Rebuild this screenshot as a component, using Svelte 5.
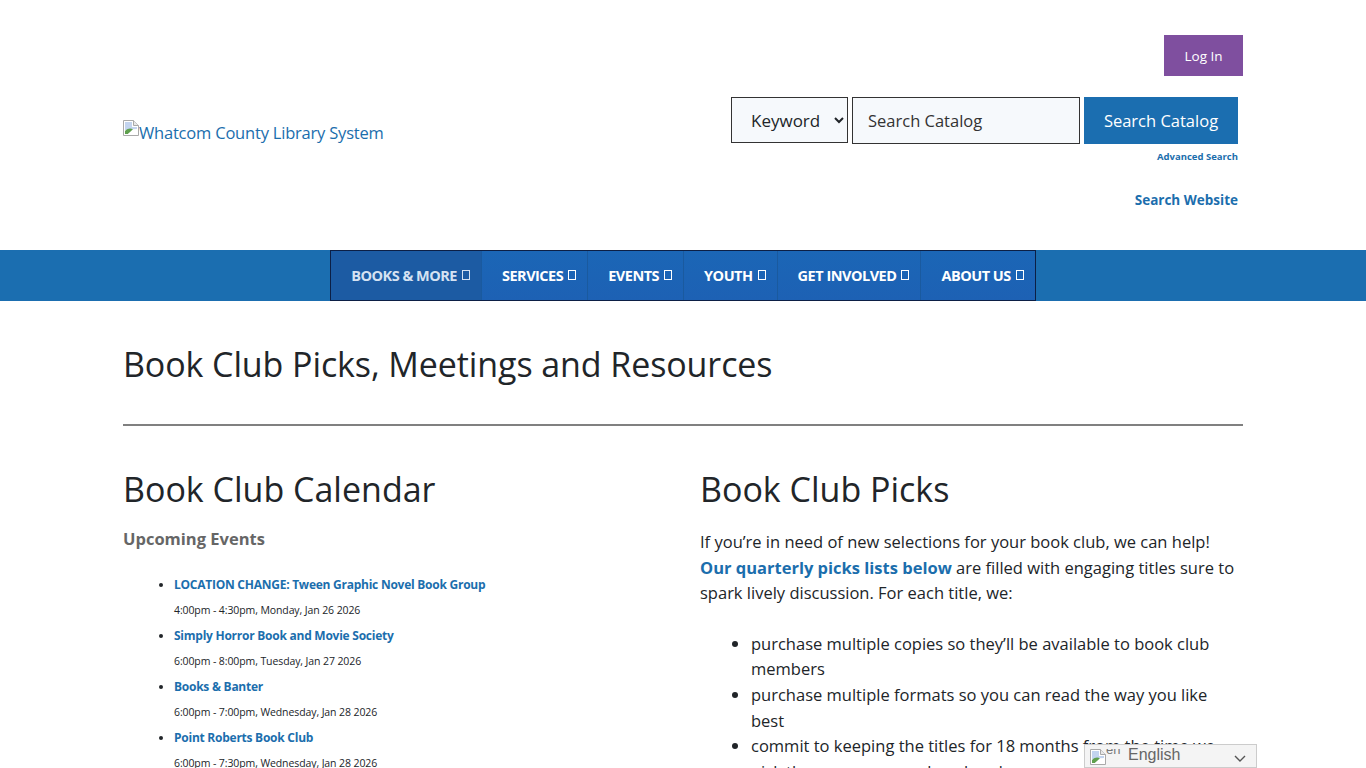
<script lang="ts">
    const navItems = [
        { label: "BOOKS & MORE", active: true },
        { label: "SERVICES" },
        { label: "EVENTS" },
        { label: "YOUTH" },
        { label: "GET INVOLVED" },
        { label: "ABOUT US" }
    ];

    const events = [
        { title: "LOCATION CHANGE: Tween Graphic Novel Book Group", time: "4:00pm - 4:30pm, Monday, Jan 26 2026" },
        { title: "Simply Horror Book and Movie Society", time: "6:00pm - 8:00pm, Tuesday, Jan 27 2026" },
        { title: "Books & Banter", time: "6:00pm - 7:00pm, Wednesday, Jan 28 2026" },
        { title: "Point Roberts Book Club", time: "6:00pm - 7:30pm, Wednesday, Jan 28 2026" }
    ];
</script>

{#snippet brokenImage()}
    <svg class="broken" width="16" height="16" viewBox="0 0 16 16" aria-hidden="true">
        <path d="M0.5 0.5H10.5L15.5 5.5V15.5H0.5Z" fill="#fff" stroke="#a9a9a9" />
        <path d="M10.5 0.5V5.5H15.5" fill="#e8e8e8" stroke="#a9a9a9" />
        <path d="M2 2H9V7H14V9L2 10Z" fill="#c3d4ef" />
        <path d="M2 14V11C5 8 8 8 10 9.5L5 14Z" fill="#5fa04e" />
        <path d="M5 14L10 9.5L14 10.5L9 14Z" fill="#fff" />
    </svg>
{/snippet}

<div class="page">
    <header class="site-header">
        <a class="logo" href="#home">{@render brokenImage()}Whatcom County Library System</a>

        <div class="header-right">
            <button class="login">Log In</button>

            <form class="search-row">
                <select class="search-type">
                    <option>Keyword</option>
                </select>
                <input class="search-input" type="text" placeholder="Search Catalog" />
                <button class="search-btn" type="button">Search Catalog</button>
            </form>
            <a class="advanced" href="#advanced">Advanced Search</a>
            <a class="website" href="#website">Search Website</a>
        </div>
    </header>

    <nav class="main-nav">
        <ul>
            {#each navItems as item}
                <li class:active={item.active}>
                    <a href="#nav">{item.label} <span class="tofu"></span></a>
                </li>
            {/each}
        </ul>
    </nav>

    <main class="content">
        <h1>Book Club Picks, Meetings and Resources</h1>
        <hr />

        <div class="columns">
            <section>
                <h2>Book Club Calendar</h2>
                <h3>Upcoming Events</h3>
                <ul class="events">
                    {#each events as ev}
                        <li>
                            <a href="#event">{ev.title}</a>
                            <p>{ev.time}</p>
                        </li>
                    {/each}
                </ul>
            </section>

            <section>
                <h2>Book Club Picks</h2>
                <p class="intro">
                    If you’re in need of new selections for your book club, we can help!
                    <a href="#picks">Our quarterly picks lists below</a> are filled with engaging titles sure to spark lively discussion. For each title, we:
                </p>
                <ul class="promises">
                    <li>purchase multiple copies so they’ll be available to book club members</li>
                    <li>purchase multiple formats so you can read the way you like best</li>
                    <li>commit to keeping the titles for 18 months from the time we pick them so you can plan ahead</li>
                </ul>
            </section>
        </div>
    </main>

    <div class="translate">
        <div class="flag">
            {@render brokenImage()}<span>en</span>
        </div>
        <span class="lang">English</span>
        <svg class="chev" width="12" height="7" viewBox="0 0 12 7" aria-hidden="true">
            <path d="M1 1L6 6L11 1" fill="none" stroke="#555" stroke-width="1.4" />
        </svg>
    </div>
</div>

<style>
    :global(body) {
        margin: 0;
        background: #fff;
    }

    .page {
        height: 768px;
        overflow: hidden;
        font-family: "Open Sans", "Noto Sans", sans-serif;
        color: #212529;
        position: relative;
    }

    a {
        color: #1b6ead;
        text-decoration: none;
    }

    .site-header {
        width: 1120px;
        height: 250px;
        margin: 0 auto;
        display: flex;
        justify-content: space-between;
        box-sizing: border-box;
        padding-top: 35px;
    }

    .logo {
        margin-top: 85px;
        font-size: 16.5px;
        line-height: 26px;
        height: 26px;
        display: block;
        letter-spacing: -0.2px;
    }

    .broken {
        vertical-align: top;
    }

    .header-right {
        display: flex;
        flex-direction: column;
        align-items: flex-end;
    }

    .login {
        width: 79px;
        height: 41px;
        border: 0;
        background: #7f4f9f;
        color: #fff;
        font: 13.5px "Open Sans", sans-serif;
        padding: 0;
    }

    .search-row {
        display: flex;
        gap: 4px;
        margin: 21px 5px 0 0;
        align-items: flex-start;
    }

    .search-type {
        width: 117px;
        height: 46px;
        border: 1px solid #333;
        background: #f6f9fc;
        color: #212529;
        font: 17px "Open Sans", sans-serif;
        padding: 0 0 0 15px;
        box-sizing: border-box;
        margin: 0;
    }

    .search-input {
        width: 228px;
        height: 47px;
        border: 1px solid #333;
        background: #f6f9fc;
        font: 16.5px "Open Sans", sans-serif;
        padding: 0 15px;
        box-sizing: border-box;
    }

    .search-input::placeholder {
        color: #333;
        opacity: 1;
    }

    .search-btn {
        width: 154px;
        height: 47px;
        border: 0;
        background: #1b6eb0;
        color: #fff;
        font: 16.5px "Open Sans", sans-serif;
        padding: 0;
    }

    .advanced {
        margin: 6px 5px 0 0;
        font-size: 9.5px;
        line-height: 14px;
        font-weight: 700;
    }

    .website {
        margin: 26px 5px 0 0;
        font-size: 13.5px;
        line-height: 20px;
        font-weight: 700;
    }

    .main-nav {
        height: 51px;
        background: #1b6eb0;
        display: flex;
        justify-content: center;
    }

    .main-nav ul {
        list-style: none;
        margin: 0;
        padding: 0;
        display: flex;
        height: 51px;
        box-sizing: border-box;
        border: 1px solid #0c1f45;
        background: #1c64b8;
    }

    .main-nav li {
        border-right: 1px solid #1a5a9f;
        background: linear-gradient(#1b66b6, #1d61b4);
    }

    .main-nav li:last-child {
        border-right: 0;
    }

    .main-nav li.active {
        background: #1c5ba3;
    }

    .main-nav li.active a {
        color: #d5e2f2;
    }

    .main-nav a {
        display: flex;
        align-items: center;
        gap: 5px;
        height: 49px;
        padding: 0 11px 0 20px;
        color: #fff;
        font-size: 14.5px;
        font-weight: 700;
        letter-spacing: -0.5px;
    }

    .tofu {
        display: inline-block;
        width: 6px;
        height: 8px;
        border: 1px solid currentColor;
        margin-bottom: 2px;
    }

    .content {
        width: 1120px;
        margin: 0 auto;
    }

    h1 {
        margin: 0;
        padding-top: 41px;
        font-size: 34px;
        line-height: 44px;
        font-weight: 400;
        letter-spacing: -0.1px;
    }

    hr {
        margin: 38px 0 0;
        border: 0;
        border-top: 2px solid #808080;
    }

    .columns {
        display: grid;
        grid-template-columns: 577px 543px;
    }

    h2 {
        margin: 41px 0 0;
        font-size: 34px;
        line-height: 44px;
        font-weight: 400;
    }

    h3 {
        margin: 16px 0 0;
        font-size: 16.5px;
        line-height: 24px;
        font-weight: 700;
        color: #666;
    }

    .events {
        margin: 21px 0 0;
        padding: 0 0 0 51px;
    }

    .events li {
        height: 51px;
        font-size: 12px;
    }

    .events a {
        display: block;
        line-height: 25px;
        font-weight: 700;
        letter-spacing: -0.25px;
    }

    .events p {
        margin: 0;
        font-size: 10.5px;
        line-height: 26px;
        letter-spacing: -0.1px;
    }

    .intro {
        margin: 18px 0 0;
        font-size: 16.5px;
        line-height: 25.6px;
    }

    .intro a {
        font-weight: 700;
    }

    .promises {
        margin: 25px 0 0;
        padding: 0 0 0 51px;
        font-size: 16.5px;
        line-height: 25.6px;
    }

    .translate {
        position: fixed;
        left: 1084px;
        top: 744px;
        width: 173px;
        height: 24px;
        box-sizing: border-box;
        border: 1px solid #ccc;
        background: #f4f4f4;
        display: flex;
        align-items: center;
        overflow: hidden;
        font-family: "Liberation Sans", Arial, sans-serif;
    }

    .flag {
        display: flex;
        align-items: flex-start;
        height: 18px;
        margin: 3px 0 0 5px;
        width: 38px;
        overflow: hidden;
        font-size: 13px;
        color: #777;
    }

    .flag span {
        margin-top: -7px;
    }

    .lang {
        font-size: 16px;
        color: #666;
        margin-top: -3px;
        margin-left: 0;
    }

    .chev {
        margin: 5px 0 0 auto;
        margin-right: 10px;
    }
</style>
